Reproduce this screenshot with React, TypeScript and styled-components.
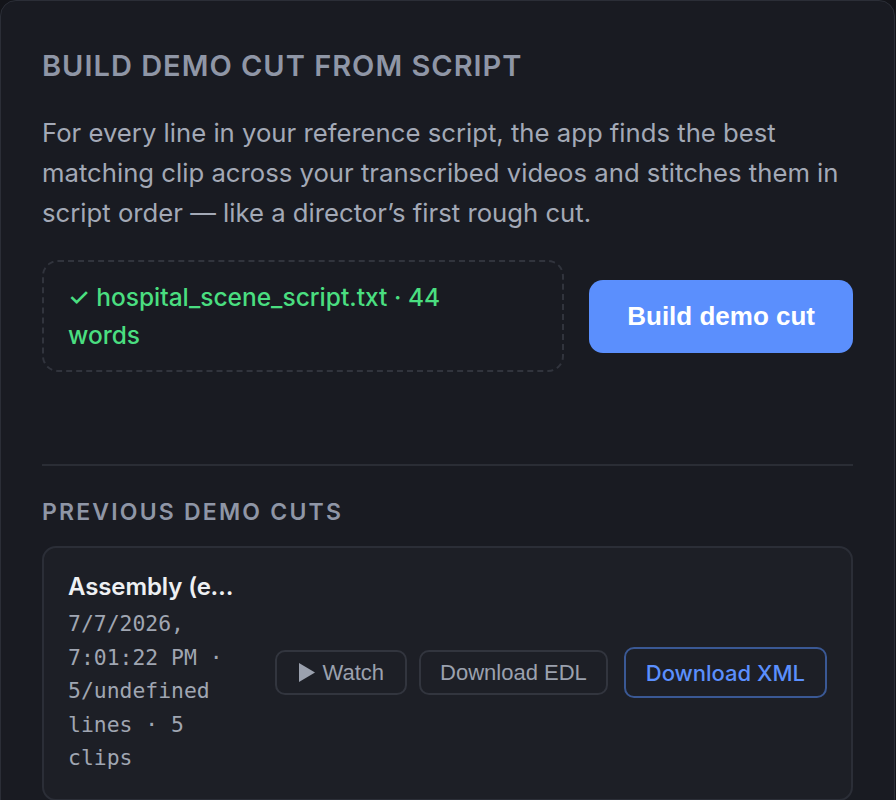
import React from 'react';
import styled, { createGlobalStyle } from 'styled-components';

const GlobalStyle = createGlobalStyle`
  html, body {
    margin: 0;
    padding: 0;
    background: #131419;
  }
  * {
    box-sizing: border-box;
  }
`;

interface DemoCut {
  title: string;
  meta: string;
}

const cuts: DemoCut[] = [
  {
    title: 'Assembly (exact match)',
    meta: '7/7/2026, 7:01:22 PM · 5/undefined lines · 5 clips',
  },
];

const App: React.FC = () => {
  return (
    <>
      <GlobalStyle />
      <Panel>
        <Heading>Build demo cut from script</Heading>
        <Intro>
          For every line in your reference script, the app finds the best matching clip
          across your transcribed videos and stitches them in script order — like a
          director’s first rough cut.
        </Intro>

        <ActionRow>
          <DropZone>
            <FileLabel>✓ hospital_scene_script.txt · 44 words</FileLabel>
          </DropZone>
          <PrimaryButton type="button">Build demo cut</PrimaryButton>
        </ActionRow>

        <Divider />

        <SectionTitle>Previous demo cuts</SectionTitle>
        {cuts.map((cut) => (
          <CutCard key={cut.title}>
            <CutInfo>
              <CutTitle>{cut.title}</CutTitle>
              <CutMeta>{cut.meta}</CutMeta>
            </CutInfo>
            <CutActions>
              <GhostButton type="button" $withIcon>
                <PlayIcon viewBox="0 0 16 19" aria-hidden>
                  <path d="M0 0 L16 9.5 L0 19 Z" />
                </PlayIcon>
                Watch
              </GhostButton>
              <GhostButton type="button">Download EDL</GhostButton>
              <LinkButton href="#">Download XML</LinkButton>
            </CutActions>
          </CutCard>
        ))}
      </Panel>
    </>
  );
};

const Panel = styled.section`
  width: 895px;
  min-height: 820px;
  padding: 47px 41px 40px;
  background: #191b22;
  border: 1px solid #2b2e37;
  border-radius: 16px;
  font-family: Inter, 'Noto Sans', sans-serif;
`;

const Heading = styled.h2`
  margin: 0;
  font-size: 29px;
  line-height: 36px;
  font-weight: 600;
  letter-spacing: 1px;
  text-transform: uppercase;
  color: #8f96a6;
`;

const Intro = styled.p`
  margin: 29px 0 0;
  font-size: 25.7px;
  line-height: 40px;
  color: #a3a9b6;
`;

const ActionRow = styled.div`
  display: flex;
  align-items: center;
  gap: 25px;
  margin-top: 27px;
`;

const DropZone = styled.div`
  flex: 1;
  min-height: 112px;
  display: flex;
  align-items: center;
  padding: 0 24px;
  border: 2px dashed #31343d;
  border-radius: 16px;
`;

const FileLabel = styled.span`
  max-width: 410px;
  font-size: 24.5px;
  line-height: 38px;
  font-weight: 500;
  color: #4ade80;
`;

const PrimaryButton = styled.button`
  flex-shrink: 0;
  height: 73px;
  padding: 0 38px;
  border: none;
  border-radius: 14px;
  background: #5b8ffd;
  color: #ffffff;
  font-family: 'Liberation Sans', Arial, sans-serif;
  font-size: 26px;
  font-weight: 700;
  cursor: pointer;
`;

const Divider = styled.hr`
  margin: 92px 0 0;
  border: none;
  border-top: 2px solid #2a2d35;
`;

const SectionTitle = styled.h3`
  margin: 32px 0 20px;
  font-size: 23px;
  line-height: 28px;
  font-weight: 600;
  letter-spacing: 2.2px;
  text-transform: uppercase;
  color: #8f96a6;
`;

const CutCard = styled.div`
  display: flex;
  align-items: center;
  gap: 32px;
  padding: 23px 24px 24px;
  background: #1d1f26;
  border: 2px solid #2b2e37;
  border-radius: 14px;
`;

const CutInfo = styled.div`
  flex: 1;
  min-width: 0;
`;

const CutTitle = styled.div`
  font-size: 24px;
  line-height: 32px;
  font-weight: 600;
  letter-spacing: -0.1px;
  color: #eef0f3;
  white-space: nowrap;
  overflow: hidden;
  text-overflow: ellipsis;
`;

const CutMeta = styled.div`
  margin-top: 4px;
  font-family: 'DejaVu Sans Mono', 'Liberation Mono', monospace;
  font-size: 21.4px;
  line-height: 33.5px;
  color: #a0a6b2;
`;

const CutActions = styled.div`
  display: flex;
  align-items: center;
  gap: 12px;
  flex-shrink: 0;
`;

const GhostButton = styled.button<{ $withIcon?: boolean }>`
  display: inline-flex;
  align-items: center;
  gap: 8px;
  height: 45px;
  padding: ${({ $withIcon }) => ($withIcon ? '0 21px 0 22px' : '0 19px')};
  background: transparent;
  border: 2px solid #32353e;
  border-radius: 10px;
  color: #9ba1ae;
  font-family: 'Liberation Sans', Arial, sans-serif;
  font-size: 22px;
  cursor: pointer;
`;

const PlayIcon = styled.svg`
  width: 16px;
  height: 19px;
  fill: #9ba1ae;
`;

const LinkButton = styled.a`
  display: inline-flex;
  align-items: center;
  height: 51px;
  margin-left: 4px;
  padding: 0 20px;
  border: 2px solid #3a5894;
  border-radius: 10px;
  color: #5b8ffd;
  font-size: 22px;
  font-weight: 500;
  text-decoration: none;
`;

export default App;
